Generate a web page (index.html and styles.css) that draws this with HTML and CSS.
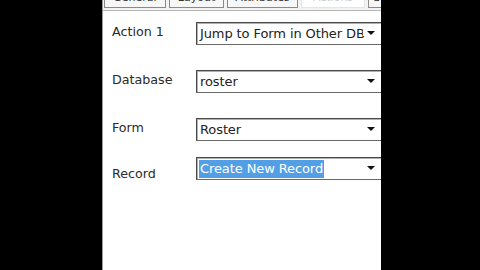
FILE: index.html
```html
<!DOCTYPE html>
<html lang="en">
<head>
    <meta charset="UTF-8">
    <meta name="viewport" content="width=device-width, initial-scale=1.0">
    <title>Button Properties</title>
    <link rel="stylesheet" href="styles.css">
</head>
<body>
    <div class="panel">
        <div class="tabbar">
            <div class="tab" style="width: 62px">General</div>
            <div class="tab" style="width: 55px">Layout</div>
            <div class="tab" style="width: 71px">Attributes</div>
            <div class="tab active" style="width: 64px">Actions</div>
            <div class="tab" style="width: 24px">Sc</div>
        </div>

        <div class="form">
            <div class="row">
                <div class="label">Action 1</div>
                <div class="combo"><span class="value">Jump to Form in Other DB</span><span class="arrow"></span></div>
            </div>
            <div class="row">
                <div class="label">Database</div>
                <div class="combo"><span class="value">roster</span><span class="arrow"></span></div>
            </div>
            <div class="row short">
                <div class="label">Form</div>
                <div class="combo"><span class="value">Roster</span><span class="arrow"></span></div>
            </div>
            <div class="row">
                <div class="label low">Record</div>
                <div class="combo"><span class="value selected">Create New Record</span><span class="arrow"></span></div>
            </div>
        </div>
    </div>
</body>
</html>
```
FILE: styles.css
```css
body {
    margin: 0;
    background: #000;
    font-family: "DejaVu Sans", Tahoma, sans-serif;
    font-size: 12.7px;
    color: #222;
}
.panel {
    margin-left: 102px;
    width: 279px;
    height: 270px;
    background: #fff;
    overflow: hidden;
    border-left: 1px solid #9a9a9a;
    box-sizing: border-box;
}
.tabbar {
    display: flex;
    align-items: flex-end;
    gap: 3px;
    height: 8px;
    padding: 0 0 2px 1px;
    overflow: hidden;
    background: #f3f3f3;
    border-bottom: 1px solid #b8b8b8;
}
.tab {
    flex: none;
    height: 18px;
    line-height: 16px;
    text-align: center;
    border: 1px solid #8a8a8a;
    border-top: none;
    background: #f7f7f7;
    box-sizing: border-box;
    color: #333;
    font-size: 11px;
    white-space: nowrap;
    overflow: hidden;
}
.tab.active { background: #fff; border-color: #e4e4e4; color: #ccc; }

.form { padding: 11px 0 0 9px; }
.row {
    display: grid;
    grid-template-columns: 84px 200px;
    height: 48px;
}
.row.short { height: 39px; }
.label { padding-top: 2px; line-height: 15px; color: #2a2a2a; }
.label.low { padding-top: 9px; }

.combo {
    display: flex;
    align-items: center;
    height: 23px;
    box-sizing: border-box;
    border: 1px solid #6a6a6a;
    border-top-color: #4a4a4a;
    border-left-color: #4a4a4a;
    box-shadow: inset 1px 1px 0 #b0b0b0;
    padding-left: 3px;
    white-space: nowrap;
    overflow: hidden;
    position: relative;
    font-size: 13px;
}
.value { line-height: 18px; letter-spacing: -0.1px; }
.value.selected { background: #539fe6; color: #fff; padding: 0 1px; margin-left: -1px; }
.arrow {
    position: absolute;
    left: 170px;
    top: 8px;
    width: 0;
    height: 0;
    border-left: 4px solid transparent;
    border-right: 4px solid transparent;
    border-top: 4px solid #111;
    box-shadow: -3px 0 0 1px #fff;
}
```
